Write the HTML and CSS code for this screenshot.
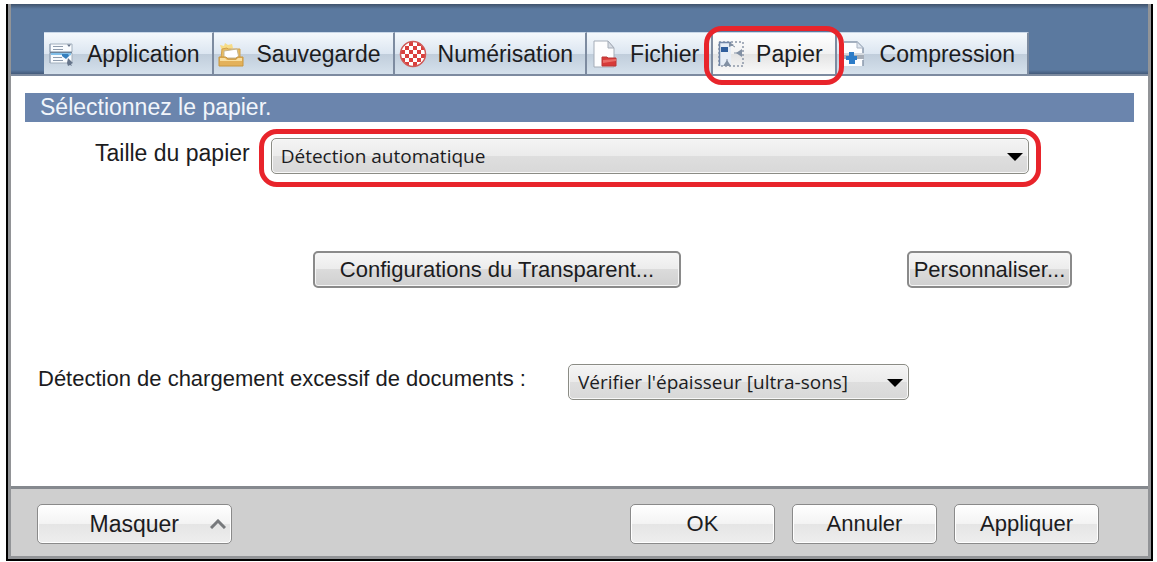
FILE: index.html
```html
<!DOCTYPE html>
<html lang="fr">
<head>
<meta charset="utf-8">
<title>Papier</title>
<link rel="stylesheet" href="styles.css">
</head>
<body>
<main class="window">
  <nav class="tabs" role="tablist">
    <button class="tab" role="tab">
      <svg class="icon" viewBox="0 0 28 28" aria-hidden="true">
        <path d="M2 4h22v8H2zM2 13h22v10H2z" fill="#f8fbfe" stroke="#a3b0be"/>
        <path d="M2 4v19" stroke="#8fa0b5"/>
        <path d="M5 6.500h10M5 9.500h10M5 17.500h9M5 20.500h10" stroke="#8d9bad"/>
        <path d="M2 12.500h22" stroke="#6d8298" stroke-width="1.500"/>
        <path d="M3 13h20v2l-4 2-4-2H3z" fill="#82c0ea"/>
        <path d="M14 14h6l1 2-3 3-4-3z" fill="#367fbd"/>
        <path d="M19 4.500h4l-2 2.500zM20 18l5 5-2 1 1 2-2-1-2 1-1-3z" fill="#65748a"/>
      </svg>
      <span>Application</span>
    </button>
    <button class="tab" role="tab">
      <svg class="icon" viewBox="0 0 28 28" aria-hidden="true">
        <path d="M2 5l4 1 1-3 3 2 4-1 1 4-11 3z" fill="#f7dc86"/>
        <path d="M4 9l5-1 1 1h12v9H3z" fill="#e9bd62" stroke="#d0a04c"/>
        <path d="M6 11l13-2 2 9H6z" fill="#fff" stroke="#c4b48d"/>
        <path d="M1 17h7l2 2h8l1-2h6v9H1z" fill="#e3b15a" stroke="#c8963f"/>
        <path d="M2 18h5l2 2h9l2-2h4v3H2z" fill="#f9dfa0"/>
      </svg>
      <span>Sauvegarde</span>
    </button>
    <button class="tab" role="tab">
      <svg class="icon" viewBox="0 0 28 28" aria-hidden="true">
        <defs>
          <pattern id="check" width="8" height="8" x="2" y="2" patternUnits="userSpaceOnUse">
            <rect width="8" height="8" fill="#fff"/>
            <path d="M0 0h4v4H0zM4 4h4v4H4z" fill="#d9403e"/>
          </pattern>
        </defs>
        <circle cx="14" cy="14" r="12.500" fill="url(#check)" stroke="#cf5a58" stroke-width="1.500"/>
      </svg>
      <span>Numérisation</span>
    </button>
    <button class="tab" role="tab">
      <svg class="icon" viewBox="0 0 28 28" aria-hidden="true">
        <path d="M3 1h14l6 7v19H3z" fill="#fdfdfe" stroke="#a5adb8"/>
        <path d="M17 1v7h6z" fill="#d7dce4" stroke="#a5adb8"/>
        <path d="M11 17h5l1 1h8v8H11z" fill="#d73a38" stroke="#b93637"/>
        <path d="M12 20l13-1v2l-13 2z" fill="#ea6c66"/>
      </svg>
      <span>Fichier</span>
    </button>
    <button class="tab tab-active" role="tab" aria-selected="true">
      <svg class="icon" viewBox="0 0 28 28" aria-hidden="true">
        <path d="M2 2h12v24H2z" fill="#e6edf6"/>
        <path d="M2 2h24v24H2z" fill="none" stroke="#8c97a8" stroke-width="1.500" stroke-dasharray="2 2"/>
        <path d="M2.500 26V2.500H14" fill="none" stroke="#7186a8" stroke-width="1.500"/>
        <path d="M4 7h7v5H4z" fill="#315f9d"/>
        <path d="M12 2v5l5-2zM25 9v8l-6-4zM6 26h8l-4-6z" fill="#8290a3"/>
        <path d="M13 4l5 3M17 13h8M10 19v6" stroke="#8290a3"/>
      </svg>
      <span>Papier</span>
    </button>
    <button class="tab" role="tab">
      <svg class="icon" viewBox="0 0 28 28" aria-hidden="true">
        <path d="M3 2h13l6 6v18H3z" fill="#fcfdff"/>
        <path d="M3 2h13l6 6v5M22 20v6" fill="none" stroke="#8998ac" stroke-width="1.500"/>
        <path d="M16 2v6h6" fill="#dfe5ee" stroke="#a9b3c2"/>
        <path d="M1 14h22v5H1z" fill="#a6adb7"/>
        <path d="M1 14h22" stroke="#d5dae0" stroke-width="2"/>
        <path d="M8 12h5v4h3v4h-2v4H8v-4H5v-4h3z" fill="#2c7cc8"/>
      </svg>
      <span>Compression</span>
    </button>
  </nav>
  <section class="panel">
    <h1 class="heading">Sélectionnez le papier.</h1>
    <div class="row size-row">
      <label for="size">Taille du papier</label>
      <div class="select-box select-wide">
        <select id="size"><option>Détection automatique</option></select>
        <svg class="arrow" viewBox="0 0 16 8" aria-hidden="true"><path d="M0 0h16L8 8z"/></svg>
      </div>
    </div>
    <div class="row button-row">
      <button class="button button-carrier">Configurations du Transparent...</button>
      <button class="button button-custom">Personnaliser...</button>
    </div>
    <div class="row feed-row">
      <label for="feed">Détection de chargement excessif de documents :</label>
      <div class="select-box">
        <select id="feed"><option>Vérifier l'épaisseur [ultra-sons]</option></select>
        <svg class="arrow" viewBox="0 0 16 8" aria-hidden="true"><path d="M0 0h16L8 8z"/></svg>
      </div>
    </div>
  </section>
  <footer class="footer">
    <button class="button action button-hide"><span>Masquer</span>
      <svg class="chevron" viewBox="0 0 16 10" aria-hidden="true"><path d="M1 9l7-7 7 7" fill="none" stroke="#77797c" stroke-width="3"/></svg>
    </button>
    <div class="actions">
      <button class="button action">OK</button>
      <button class="button action">Annuler</button>
      <button class="button action">Appliquer</button>
    </div>
  </footer>
</main>
</body>
</html>
```
FILE: styles.css
```css
* { box-sizing: border-box; }

body {
  margin: 0;
  padding: 4px 4px 1px 6px;
  background: #fff;
  color: #1c1c1e;
  font: 22px/26px "Liberation Sans", Arial, sans-serif;
}

button, select { color: inherit; font: inherit; }

.window {
  display: flex;
  flex-direction: column;
  min-height: calc(100vh - 5px);
  border: 2px solid #000;
  border-top: 0;
  box-shadow: inset 0 0 0 3px #929497;
  padding: 0 3px 3px;
}

.tabs {
  display: flex;
  align-items: flex-end;
  height: 72px;
  padding-left: 33px;
  border-bottom: 2px solid #7d8ba0;
  background: linear-gradient(#40536c, #5b799f 5px, #5b799f 66px, #435a7a);
}

.tab {
  display: flex;
  align-items: center;
  gap: 11px;
  height: 42px;
  padding: 0 12px 0 4px;
  border: 0;
  border-top: 1px solid #c9d7e8;
  border-right: 2px solid #7d8ba0;
  background: linear-gradient(#f4f8fc, #dce6f1 50%, #c0cddb 51%, #d5e1ec);
  font-size: 23px;
  white-space: nowrap;
}

.tab-active {
  position: relative;
  background: linear-gradient(#fff, #f2f2f2 50%, #e3e3e3 51%, #fafafa);
}

.tab-active::after {
  content: "";
  position: absolute;
  inset: -7px -9px -11px;
  border: 5px solid #e8242b;
  border-radius: 18px;
  z-index: 1;
}

.icon { flex: none; width: 28px; height: 28px; }

.panel { flex: 1; padding: 17px 14px 0; }

.heading {
  margin: 0;
  padding: 0 15px;
  background: #6b85ad;
  color: #f1f5fb;
  font-size: 23px;
  font-weight: 400;
  line-height: 29px;
}

.row { display: flex; align-items: flex-start; }

.row label { line-height: 30px; }

.size-row { gap: 21px; margin-top: 16px; padding: 0 105px 0 70px; }

.size-row label { font-size: 23px; }

.button-row { justify-content: space-between; margin-top: 77px; padding: 0 62px 0 288px; }

.feed-row { gap: 42px; margin-top: 76px; padding-left: 13px; }

.select-box { position: relative; width: 341px; }

.select-wide { flex: 1; }

.select-wide::after {
  content: "";
  position: absolute;
  inset: -9px -12px -13px;
  border: 5px solid #e8242b;
  border-radius: 18px;
  pointer-events: none;
}

select {
  display: block;
  width: 100%;
  height: 36px;
  padding: 0 40px 0 9px;
  border: 1px solid #8b8c85;
  border-radius: 5px;
  appearance: none;
  background: linear-gradient(#f4f4f4, #ebebeb 50%, #dedede 51%, #d8d8d8);
  box-shadow: inset 0 0 0 1px #f8f8f8;
  font-family: "Open Sans", "Noto Sans", sans-serif;
  font-size: 19px;
}

.arrow {
  position: absolute;
  top: 15px;
  right: 6px;
  width: 16px;
  height: 8px;
  pointer-events: none;
}

.button {
  height: 37px;
  padding: 0;
  border: 2px solid #8a8a8a;
  border-radius: 5px;
  background: linear-gradient(#f6f6f6, #ececec 49%, #dbdbdb 50%, #d0d0d0);
  box-shadow: inset 0 0 0 1px #f6f6f6;
}

.button-carrier { width: 368px; }

.button-custom { width: 165px; }

.footer {
  display: flex;
  align-items: center;
  justify-content: space-between;
  height: 70px;
  padding: 2px 49px 0 26px;
  border-top: 3px solid #85898e;
  background: #cfcfcf;
}

.action {
  width: 145px;
  height: 40px;
  border-width: 1px;
  background: linear-gradient(#fff, #f3f3f3 50%, #e5e5e5 51%, #eee);
  box-shadow: inset 0 0 0 1px #fff;
}

.actions { display: flex; gap: 17px; }

.button-hide {
  display: flex;
  align-items: center;
  justify-content: flex-end;
  gap: 31px;
  width: 195px;
  padding-right: 5px;
  font-size: 23px;
}

.chevron { width: 16px; height: 10px; }
```
